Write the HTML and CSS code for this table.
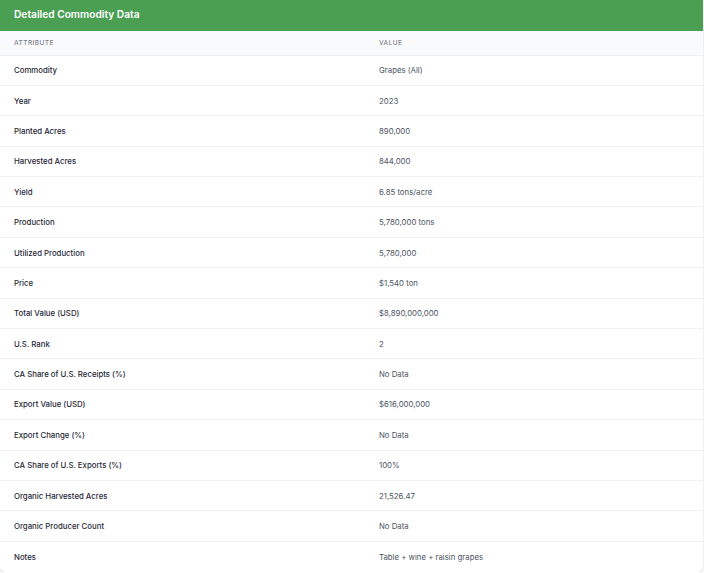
FILE: index.html
```html
<!DOCTYPE html>
<html>
<head>
<meta charset="utf-8">
<link rel="stylesheet" href="styles.css">
</head>
<body>
<div class="card">
  <div class="card-header">Detailed Commodity Data</div>
  <table class="data">
    <thead>
      <tr><th class="attr">Attribute</th><th>Value</th></tr>
    </thead>
    <tbody>
      <tr><td class="attr">Commodity</td><td>Grapes (All)</td></tr>
      <tr><td class="attr">Year</td><td>2023</td></tr>
      <tr><td class="attr">Planted Acres</td><td>890,000</td></tr>
      <tr><td class="attr">Harvested Acres</td><td>844,000</td></tr>
      <tr><td class="attr">Yield</td><td>6.85 tons/acre</td></tr>
      <tr><td class="attr">Production</td><td>5,780,000 tons</td></tr>
      <tr><td class="attr">Utilized Production</td><td>5,780,000</td></tr>
      <tr><td class="attr">Price</td><td>$1,540 ton</td></tr>
      <tr><td class="attr">Total Value (USD)</td><td>$8,890,000,000</td></tr>
      <tr><td class="attr">U.S. Rank</td><td>2</td></tr>
      <tr><td class="attr">CA Share of U.S. Receipts (%)</td><td>No Data</td></tr>
      <tr><td class="attr">Export Value (USD)</td><td>$616,000,000</td></tr>
      <tr><td class="attr">Export Change (%)</td><td>No Data</td></tr>
      <tr><td class="attr">CA Share of U.S. Exports (%)</td><td>100%</td></tr>
      <tr><td class="attr">Organic Harvested Acres</td><td>21,526.47</td></tr>
      <tr><td class="attr">Organic Producer Count</td><td>No Data</td></tr>
      <tr><td class="attr">Notes</td><td>Table + wine + raisin grapes</td></tr>
    </tbody>
  </table>
</div>
</body>
</html>
```

FILE: styles.css
```css
html, body {
  margin: 0;
  padding: 0;
  background: #ffffff;
}
body {
  font-family: Inter, "Liberation Sans", sans-serif;
  color: #1f2937;
}
.card {
  width: 703px;
  background: #fff;
  border-radius: 0 0 5px 5px;
  box-shadow: 0 1px 2px rgba(0,0,0,0.18), 0 0 1px rgba(0,0,0,0.12);
  overflow: hidden;
}
.card-header {
  background: #4b9f53;
  color: #fff;
  font-size: 10.2px;
  font-weight: 600;
  height: 31px;
  line-height: 29px;
  padding-left: 14px;
  box-sizing: border-box;
}
.data {
  width: 100%;
  border-collapse: collapse;
  table-layout: fixed;
}
.data th {
  background: #f9fafb;
  color: #7b818b;
  font-size: 6.5px;
  font-weight: 500;
  text-transform: uppercase;
  letter-spacing: 0.45px;
  text-align: left;
  height: 24px;
  padding: 0 0 0 14px;
  border-bottom: 1px solid #eef0f2;
  box-sizing: border-box;
}
.data th.attr, .data td.attr {
  width: 365px;
}
.data td {
  height: 30.4px;
  padding: 0 0 0 14px;
  font-size: 7.8px;
  color: #4b5563;
  border-bottom: 1px solid #f0f1f3;
  box-sizing: border-box;
}
.data tr:last-child td {
  border-bottom: none;
}
.data td.attr {
  color: #1f2937;
  font-weight: 500;
}
```
